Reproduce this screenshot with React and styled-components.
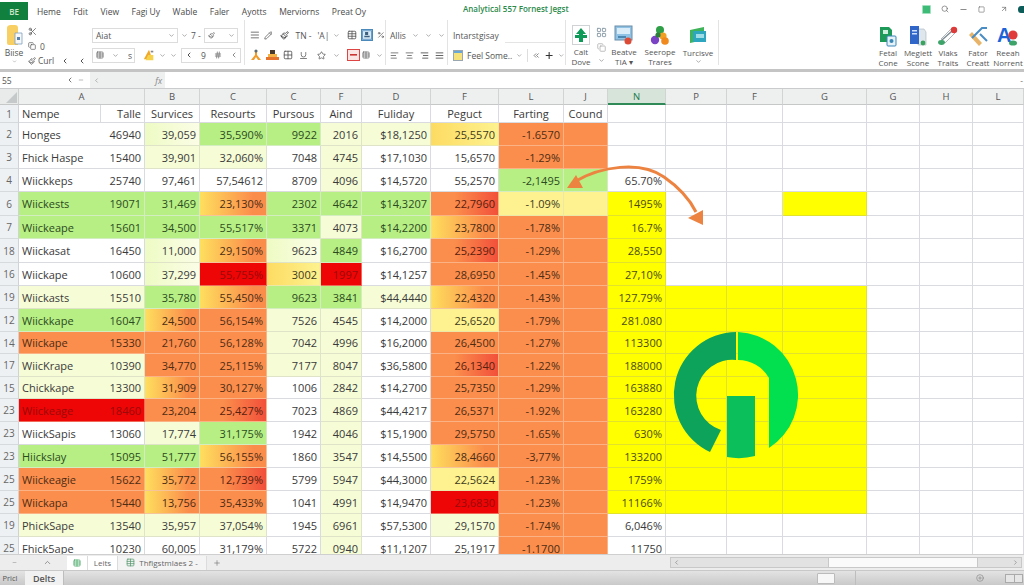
import React from 'react';
import styled, { createGlobalStyle } from 'styled-components';
import { ChevronDown, ChevronUp, Search, Minus, Plus, CirclePlus, Square, ArrowUpRight, AlignJustify, AlignLeft, AlignCenter, AlignRight, Star, ChevronLeft, ChevronRight, ChevronsLeft, Hash, Grid2x2, Copy, Percent, Pencil, Underline, Scissors, Paintbrush, Table, LayoutGrid } from 'lucide-react';

const GlobalStyle = createGlobalStyle`
  html, body {
    margin: 0;
    padding: 0;
    background: #fff;
    overflow: hidden;
  }
  * {
    box-sizing: border-box;
  }
`;

const TONES = {
  w: { bg: '#fff', line: '#d9dbe0', color: '#3a3a3a' },
  p: { bg: '#f6fcd6', line: '#dfe4c8', color: '#3a3a3a' },
  pf: { bg: 'linear-gradient(90deg, #eefbc4, #fbfde6)', line: '#dfe4c8', color: '#3a3a3a' },
  g: { bg: '#b7ef85', line: '#d3ecc0', color: '#2c4a20' },
  yl: { bg: '#fdf28f', line: '#ece8a8', color: '#3e3a1c' },
  yy: { bg: 'linear-gradient(90deg, #fddb62, #fdf28f)', line: '#ece8a8', color: '#3e3a1c' },
  yo: { bg: 'linear-gradient(90deg, #fedf5e, #fb8d4b 80%)', line: '#f5c49a', color: '#4a2c14' },
  o: { bg: '#fb8e4c', line: '#fbb285', color: '#4e2c14' },
  or: { bg: 'linear-gradient(90deg, #fb8e4c 35%, #f2503a)', line: '#fbb285', color: '#57200f' },
  r: { bg: '#ee0505', line: '#f06a5a', color: '#9a0a0a' },
  Y: { bg: '#ffff00', line: '#e2e22c', color: '#4b4b12' },
};

// talle and name share a tone, the rest are listed column by column
const ROWS = [
  { n: '2', h: 23, v: ['Honges', '46940', '39,059', '35,590%', '9922', '2016', '$18,1250', '25,5570', '-1.6570', '', ''], t: 'w pf g g p p yy o o w' },
  { n: '3', h: 23, v: ['Fhick Haspe', '15400', '39,901', '32,060%', '7048', '4745', '$17,1030', '15,6570', '-1.29%', '', ''], t: 'w p p w p w w o o w' },
  { n: '4', h: 23, v: ['Wiickkeps', '25740', '97,461', '57,54612', '8709', '4096', '$14,5720', '55,2570', '-2,1495', '', '65.70%'], t: 'w w w w p w w g g w' },
  { n: '6', h: 24, v: ['Wiickests', '19071', '31,469', '23,130%', '2302', '4642', '$14,3207', '22,7960', '-1.09%', '', '1495%'], t: 'g g yo g g g or yl yl Y', x: 'w w Y' },
  { n: '7', h: 23, v: ['Wiickeape', '15601', '34,500', '55,517%', '3371', '4073', '$14,2200', '23,7800', '-1.78%', '', '16.7%'], t: 'g g g g p g yo o o Y' },
  { n: '18', h: 24, v: ['Wiickasat', '16450', '11,000', '29,150%', '9623', '4849', '$16,2700', '25,2390', '-1.29%', '', '28,550'], t: 'w pf yo pf g w or o o Y' },
  { n: '16', h: 23, v: ['Wiickape', '10600', '37,299', '55,755%', '3002', '1997', '$14,1257', '28,6950', '-1.45%', '', '27,10%'], t: 'w pf r yy r w o o o Y' },
  { n: '19', h: 23, v: ['Wiickasts', '15510', '35,780', '55,450%', '9623', '3841', '$44,4440', '22,4320', '-1.43%', '', '127.79%'], t: 'p g yo g g p yo o o Y', x: 'Y Y Y' },
  { n: '12', h: 23, v: ['Wiickkape', '16047', '24,500', '56,154%', '7526', '4545', '$14,2000', '25,6520', '-1.79%', '', '281.080'], t: 'g yo o p p w yl o o Y', x: 'Y Y Y' },
  { n: '14', h: 22, v: ['Wiickape', '15330', '21,760', '56,128%', '7042', '4996', '$16,2000', '26,4500', '-1.27%', '', '113300'], t: 'o o o p p w o o o Y', x: 'Y Y Y' },
  { n: '17', h: 23, v: ['WiicKrape', '10390', '34,770', '25,115%', '7177', '8047', '$36,5800', '26,1340', '-1.22%', '', '188000'], t: 'p o o p p w or o o Y', x: 'Y Y Y' },
  { n: '15', h: 22, v: ['Chickkape', '13300', '31,909', '30,127%', '1006', '2842', '$14,2700', '25,7350', '-1.29%', '', '163880'], t: 'p yo o w p w o o o Y', x: 'Y Y Y' },
  { n: '23', h: 23, v: ['Wiickeage', '18460', '23,204', '25,427%', '7023', '4869', '$44,4217', '26,5371', '-1.92%', '', '163280'], t: 'r o or w p w o o o Y', x: 'Y Y Y' },
  { n: '23', h: 23, v: ['WiickSapis', '13060', '17,774', '31,175%', '1942', '4046', '$15,1900', '29,5750', '-1.65%', '', '630%'], t: 'w p g w p w o o o Y', x: 'Y Y Y' },
  { n: '23', h: 23, v: ['Hiickslay', '15095', '51,777', '56,155%', '1860', '3547', '$14,5500', '28,4660', '-3,77%', '', '133200'], t: 'g g yo w p w yo o o Y', x: 'Y Y Y' },
  { n: '25', h: 23, v: ['Wiickeagie', '15622', '35,772', '12,739%', '5799', '5947', '$44,3000', '22,5624', '-1.23%', '', '1759%'], t: 'o yo or w p w yl o o Y', x: 'Y Y Y' },
  { n: '25', h: 23, v: ['Wiickapa', '15440', '13,756', '35,433%', '1041', '4991', '$14,9470', '23,6830', '-1.23%', '', '11166%'], t: 'o yo o w p w r o o Y', x: 'Y Y Y' },
  { n: '19', h: 23, v: ['PhickSape', '13540', '35,957', '37,054%', '1945', '6961', '$57,5300', '29,1570', '-1.74%', '', '6,046%'], t: 'p p p w p w p o o w' },
  { n: '25', h: 23, v: ['Fhick5ape', '10230', '60,005', '31,179%', '5722', '0940', '$11,1207', '25,1917', '-1.1700', '', '11750'], t: 'w w w w p w w o o w' },
];

const COLUMNS = ['A', 'B', 'C', 'C', 'F', 'D', 'F', 'L', 'J', 'N', 'P', 'F', 'G', 'G', 'H', 'L'];
const HEADINGS = ['Nempe', 'Talle', 'Survices', 'Resourts', 'Pursous', 'Aind', 'Fuliday', 'Peguct', 'Farting', 'Cound', ''];
const GRID = '19px 82px 44px 55px 67px 54px 41px 69px 68px 65px 44px 58px 61px 56px 84px 53px 53px 51px';
const HEAD_GRID = '19px 126px 55px 67px 54px 41px 69px 68px 65px 44px 58px 61px 56px 84px 53px 53px 51px';

const Page = styled.div`
  position: relative;
  width: 1024px;
  height: 585px;
  display: flex;
  flex-direction: column;
  font-family: 'Open Sans', 'Liberation Sans', sans-serif;
  color: #444;
  overflow: hidden;
  background: #fff;
`;

const TitleBar = styled.div`
  height: 20px;
  flex: none;
  display: flex;
  align-items: flex-start;
  background: #fff;
`;

const FileTab = styled.div`
  width: 28px;
  height: 18px;
  margin-top: 2px;
  background: #11803f;
  color: #cfe9c8;
  font-size: 8px;
  font-weight: 600;
  display: flex;
  align-items: center;
  justify-content: center;
`;

const Menu = styled.nav`
  display: flex;
  gap: 12.5px;
  margin-left: 9px;
  padding-top: 5px;
  font-size: 8.5px;
  line-height: 14px;
  color: #4a4a4a;
  white-space: nowrap;
`;

const DocTitle = styled.div`
  position: absolute;
  left: 463px;
  top: 2px;
  font-size: 8px;
  line-height: 13px;
  font-weight: 600;
  color: #2a8a4a;
  white-space: nowrap;
`;

const WindowButtons = styled.div`
  margin-left: auto;
  display: flex;
  align-items: center;
  gap: 10px;
  height: 18px;
  color: #666;
`;

const SaveBadge = styled.span`
  width: 9px;
  height: 9px;
  background: #3fbb78;
  border: 1.5px solid #9fe0bd;
  border-radius: 1px;
`;

const TealDot = styled.span`
  width: 6px;
  height: 7px;
  background: #0c5c5a;
  border-radius: 50% 0 0 50%;
`;

const Ribbon = styled.div`
  height: 52px;
  flex: none;
  display: flex;
  background: #fff;
  font-size: 8.5px;
  color: #555;
  border-bottom: 3px solid #c4c4c4;
`;

const Group = styled.div`
  width: ${p => p.$w}px;
  flex: none;
  display: flex;
  flex-direction: ${p => (p.$row ? 'row' : 'column')};
  gap: ${p => (p.$row ? 0 : 4)}px;
  padding: ${p => p.$pad || '7px 0 0 3px'};
  border-right: ${p => (p.$line ? '1px solid #e3e3e3' : 'none')};
  margin-bottom: 4px;
`;

const ToolRow = styled.div`
  display: flex;
  align-items: center;
  gap: ${p => p.$gap || 4}px;
  height: 16px;
  white-space: nowrap;
`;

const Nudge = styled.span`
  display: inline-flex;
  align-items: center;
  margin-left: ${p => p.$l}px;
`;

const Rule = styled.span`
  flex: 1;
  height: 1px;
  margin: 14px 0 0 2px;
  background: #e4e4e4;
`;

const Divider = styled.span`
  width: 1px;
  height: 13px;
  background: #dedede;
`;

const PasteCol = styled.div`
  width: 24px;
  display: flex;
  flex-direction: column;
  align-items: center;
  gap: 2px;
  line-height: 9px;
`;

const SmallCol = styled.div`
  flex: 1;
  display: flex;
  flex-direction: column;
  justify-content: space-between;
  padding-left: 2px;
  margin-bottom: -3px;
`;

const Field = styled.div`
  width: ${p => p.$w}px;
  height: ${p => p.$h || 15}px;
  display: flex;
  align-items: center;
  justify-content: space-between;
  padding: 0 2px 0 3px;
  border: 1px solid #dcdcdc;
  background: #fff;
`;

const Chip = styled.span`
  width: 12px;
  height: 12px;
  display: inline-flex;
  align-items: center;
  justify-content: center;
  flex: none;
  background: ${p => p.$bg || 'transparent'};
  border: ${p => (p.$edge ? `1px solid ${p.$edge}` : 'none')};
  color: ${p => p.$color || '#555'};
`;

const Swatch = styled.span`
  width: 10px;
  height: 11px;
  flex: none;
  background: linear-gradient(#6aa6d6 25%, #f5e27a 25%);
  border: 1px solid #9aa7b0;
`;

const BigTool = styled.div`
  width: ${p => p.$w || 30}px;
  flex: none;
  display: flex;
  flex-direction: column;
  align-items: center;
  text-align: center;
  line-height: 9.5px;
  font-size: 8px;
  white-space: nowrap;
`;

const BigIcon = styled.div`
  height: 23px;
  margin-bottom: 1px;
  display: flex;
  align-items: center;
  justify-content: center;
`;

const PlusBox = styled.div`
  width: 18px;
  height: 20px;
  margin-bottom: 2px;
  display: flex;
  align-items: center;
  justify-content: center;
  border: 1px solid #cfd3d6;
  color: #0e9a58;
`;

const StackedIcons = styled.div`
  display: flex;
  flex-direction: column;
  align-items: center;
  gap: 5px;
  padding-top: 3px;
`;

const RightTools = styled.div`
  margin-left: auto;
  display: flex;
  padding-top: 4px;
  margin-right: 1px;
`;

const FormulaBar = styled.div`
  height: 17px;
  flex: none;
  display: flex;
  align-items: center;
  background: #fff;
  border-bottom: 1px solid #c9cbcc;
  font-size: 8.5px;
  color: #555;
`;

const NameBox = styled.div`
  width: 66px;
  padding-left: 2px;
`;

const FormulaControls = styled.div`
  width: 24px;
  display: flex;
  align-items: center;
  gap: 4px;
  color: #777;
`;

const FormulaGrey = styled.div`
  width: 75px;
  height: 100%;
  display: flex;
  align-items: center;
  justify-content: space-between;
  padding: 0 3px;
  background: #eeefef;
  color: #888;
  font-style: italic;
`;

const FormulaInput = styled.div`
  flex: 1;
  text-align: right;
  padding-right: 1px;
  color: #777;
`;

const Sheet = styled.div`
  height: 465px;
  flex: none;
  overflow: hidden;
  background: #fff;
  font-size: 11px;
`;

const ColumnHead = styled.div`
  display: grid;
  grid-template-columns: ${HEAD_GRID};
  height: 16px;
`;

const Corner = styled.div`
  background: #e9ebeb;
  border-right: 1px solid #cfd1d1;
  border-bottom: 1px solid #c6c8c8;
  position: relative;
  overflow: hidden;
  &::after {
    content: '';
    position: absolute;
    right: 1px;
    bottom: 1px;
    border-style: solid;
    border-width: 0 0 11px 11px;
    border-color: transparent transparent #c6c9c9 transparent;
  }
`;

const ColLabel = styled.div`
  display: flex;
  align-items: center;
  justify-content: center;
  font-size: 9.5px;
  color: ${p => (p.$active ? '#1d7a45' : '#555')};
  background: ${p => (p.$active ? '#d7e4da' : '#eef0f0')};
  border-right: 1px solid #d2d4d4;
  border-bottom: ${p => (p.$active ? '2px solid #2f8a58' : '1px solid #c6c8c8')};
`;

const Row = styled.div`
  display: grid;
  grid-template-columns: ${GRID};
  height: ${p => p.$h}px;
`;

const RowLabel = styled.div`
  display: flex;
  align-items: center;
  justify-content: center;
  font-size: 10px;
  color: #666;
  background: #eef1f3;
  border-right: 1px solid #cfd2d6;
  border-bottom: 1px solid #d7dadd;
`;

const Cell = styled.div`
  display: flex;
  align-items: center;
  justify-content: ${p => (p.$left ? 'flex-start' : p.$center ? 'center' : 'flex-end')};
  padding: ${p => (p.$left ? '0 0 0 3px' : p.$center ? '0' : '0 3px 0 0')};
  background: ${p => TONES[p.$tone].bg};
  color: ${p => TONES[p.$tone].color};
  border-right: ${p => (p.$open ? 'none' : `1px solid ${TONES[p.$tone].line}`)};
  border-bottom: 1px solid ${p => TONES[p.$tone].line};
  white-space: nowrap;
  overflow: hidden;
`;

const TabBar = styled.div`
  height: 17px;
  flex: none;
  display: flex;
  align-items: center;
  background: #ededed;
  border-top: 1px solid #cfcfcf;
  border-bottom: 1px solid #c8c8c8;
  font-size: 8px;
  color: #666;
`;

const TabControl = styled.span`
  width: ${p => p.$w}px;
  display: flex;
  align-items: center;
  justify-content: center;
  color: #777;
`;

const SheetTab = styled.div`
  height: 14px;
  width: ${p => p.$w}px;
  display: flex;
  align-items: center;
  justify-content: center;
  gap: 4px;
  background: ${p => (p.$on ? '#fff' : '#f4f4f4')};
  border-right: 1px solid #dcdcdc;
  white-space: nowrap;
`;

const Scroller = styled.div`
  position: relative;
  margin-left: auto;
  margin-right: 2px;
  width: 352px;
  height: 11px;
  background: #e2e2e2;
  border: 1px solid #c8c8c8;
  display: flex;
  align-items: center;
  justify-content: space-between;
  padding: 0 2px;
  color: #777;
`;

const Thumb = styled.div`
  position: absolute;
  left: 157px;
  top: 0;
  width: 150px;
  height: 9px;
  background: #fafafa;
  border-left: 1px solid #c8c8c8;
  border-right: 1px solid #c8c8c8;
`;

const StatusBar = styled.div`
  flex: 1;
  display: flex;
  align-items: stretch;
  background: linear-gradient(#e3e3e3, #c9c9c9);
  font-size: 8px;
  color: #555;
`;

const StatusTab = styled.div`
  width: ${p => p.$w}px;
  display: flex;
  align-items: center;
  justify-content: center;
  font-size: ${p => (p.$on ? 9 : 7.5)}px;
  font-weight: ${p => (p.$on ? 600 : 400)};
  background: ${p => (p.$on ? '#f1f1f1' : 'transparent')};
  border-right: ${p => (p.$on ? '1px solid #bdbdbd' : 'none')};
  margin-right: ${p => (p.$on ? 0 : 5)}px;
`;

const ZoomArea = styled.div`
  margin-left: auto;
  display: flex;
  align-items: center;
  height: 100%;
  color: #888;
`;

const ZoomBox = styled.span`
  width: 18px;
  height: 11px;
  background: #f7f7f7;
  border: 1px solid #bbb;
  border-radius: 1px;
  margin-right: 20px;
`;

const ZoomTrack = styled.span`
  width: 121px;
  height: 100%;
  border-left: 1px solid #bdbdbd;
`;

const ZoomPlus = styled.span`
  width: 18px;
  height: 9px;
  margin: 0 1px 0 21px;
  border: 1px solid #aaa;
  background: linear-gradient(90deg, #e6e6e6 48%, #aaa 48%, #aaa 54%, #e6e6e6 54%);
`;

const Overlay = styled.svg`
  position: absolute;
  left: 0;
  top: 0;
  width: 1024px;
  height: 585px;
  pointer-events: none;
`;

const PasteIcon = () => (
  <svg width="17" height="22" viewBox="0 0 17 22">
    <path d="M1 4 Q1 1 5 1 H9 Q12 1 12 4 V21 H3 Q1 21 1 19 Z" fill="#f7cf63" />
    <path d="M9 9 H16 V20 H9 Z" fill="#f6f8fa" stroke="#7fa0c0" strokeWidth="0.8" />
    <path d="M11 13 H14 V16 H11 Z" fill="#5b84ad" />
  </svg>
);

const FillIcon = () => (
  <svg width="14" height="14" viewBox="0 0 14 14">
    <path d="M1 12 L7 1 L11 12 Z" fill="#f0a82a" />
    <path d="M6 7 H12 V13 H3 Z" fill="#f6d24a" />
    <path d="M9 2 H12 V4 H9 Z" fill="#888" />
  </svg>
);

const BlueDoc = () => (
  <svg width="13" height="12" viewBox="0 0 13 12">
    <rect x="0.5" y="0.5" width="12" height="11" fill="#d8e8f5" stroke="#4c89bb" />
    <path d="M4 2 H8 V6 H4 Z M3 7 H10 V9 H3 Z" fill="#3b5f7d" />
  </svg>
);

const OrangeMan = () => (
  <svg width="12" height="12" viewBox="0 0 12 12">
    <path d="M5 1 V6 L1 11 H4 L6 8 L8 11 H11 L7 6 V1 Z" fill="#ef9c2d" />
    <circle cx="6" cy="2" r="1.6" fill="#5d6b75" />
  </svg>
);

const OrangeStack = () => (
  <svg width="13" height="12" viewBox="0 0 13 12">
    <rect x="4" y="1" width="5" height="4" fill="#4a3a2a" />
    <rect x="2" y="5" width="9" height="3" fill="#f3b246" />
    <rect x="0" y="8" width="13" height="3" fill="#e5722d" />
  </svg>
);

const RedBox = () => (
  <svg width="13" height="12" viewBox="0 0 13 12">
    <rect x="0.5" y="0.5" width="12" height="11" fill="#fbe4e4" stroke="#d44" />
    <rect x="3" y="5" width="7" height="1.6" fill="#c33" />
  </svg>
);

const CellIcon = () => (
  <svg width="12" height="14" viewBox="0 0 12 14">
    <path d="M6 0 L11 6 H8 V14 H4 V6 H1 Z M0 7 H12 V10 H0 Z" fill="#0e9a58" />
  </svg>
);

const ScreenIcon = () => (
  <svg width="20" height="22" viewBox="0 0 20 22">
    <rect x="1" y="2" width="17" height="14" fill="#8fc2e4" stroke="#6a8ea8" />
    <rect x="3" y="4" width="13" height="6" fill="#d9ecf7" />
    <rect x="4" y="12" width="8" height="2" fill="#4a86b0" />
    <circle cx="14" cy="17" r="3.5" fill="#dd4a35" />
  </svg>
);

const BlobsIcon = () => (
  <svg width="20" height="22" viewBox="0 0 20 22">
    <circle cx="10" cy="6" r="4" fill="#2e9e47" />
    <circle cx="13" cy="12" r="3.6" fill="#f2a024" />
    <circle cx="5" cy="16" r="4.2" fill="#7a42c4" />
    <circle cx="15" cy="17" r="3.8" fill="#f08a1e" />
    <circle cx="8" cy="11" r="2.6" fill="#2d7d3c" />
  </svg>
);

const FolderCards = () => (
  <svg width="18" height="20" viewBox="0 0 18 20">
    <path d="M1 4 L15 1 V14 L1 17 Z" fill="#3eb358" />
    <rect x="4" y="5" width="13" height="11" fill="#2ea6c0" />
    <rect x="7" y="8" width="8" height="4" fill="#9edce6" />
  </svg>
);

const GreenDocs = () => (
  <svg width="20" height="22" viewBox="0 0 20 22">
    <path d="M2 2 H11 L14 5 V17 H2 Z" fill="#1e9a58" />
    <rect x="5" y="5" width="5" height="4" fill="#cdeedd" />
    <rect x="9" y="11" width="9" height="10" rx="1" fill="#e6f1f8" stroke="#3a87b8" />
    <circle cx="13.5" cy="16" r="2" fill="#3a87b8" />
  </svg>
);

const BlueDocs = () => (
  <svg width="20" height="22" viewBox="0 0 20 22">
    <path d="M10 4 H16 L18 7 V20 H10 Z" fill="#dfe6ec" stroke="#a9b4bd" strokeWidth="0.6" />
    <path d="M2 1 H11 V19 H2 Z" fill="#2f66c8" />
    <rect x="4" y="5" width="5" height="1.5" fill="#cfe0fb" />
    <rect x="4" y="8" width="5" height="1.5" fill="#cfe0fb" />
    <circle cx="15" cy="18" r="2.4" fill="#3aa35e" />
  </svg>
);

const PinIcon = () => (
  <svg width="22" height="22" viewBox="0 0 22 22">
    <path d="M15 6 L5 15" stroke="#7c8a92" strokeWidth="1.4" fill="none" />
    <path d="M14 4 L18 8 L8 18 L4 14 Z" fill="none" stroke="#9aa5ab" strokeWidth="0.8" />
    <circle cx="17" cy="5" r="3.2" fill="#dd3a3a" />
    <ellipse cx="4.5" cy="17.5" rx="3.4" ry="2.4" fill="#3da368" />
  </svg>
);

const RulerIcon = () => (
  <svg width="22" height="22" viewBox="0 0 22 22">
    <path d="M2 10 L12 21 L15 18 L5 7 Z" fill="#e8b46a" />
    <path d="M5 13 L15 3 H20 M13 9 L20 16" stroke="#4a8dc4" strokeWidth="2" fill="none" />
  </svg>
);

const LetterIcon = () => (
  <svg width="22" height="22" viewBox="0 0 22 22">
    <text x="0" y="17" fontSize="20" fontWeight="700" fontFamily="Liberation Sans, sans-serif" fill="#1d63d8">A</text>
    <circle cx="16" cy="10" r="4.6" fill="#e03a3a" />
    <ellipse cx="16" cy="18" rx="4" ry="2.6" fill="#3da368" />
  </svg>
);

const Chevron = ({ s = 7 }) => <ChevronDown size={s} strokeWidth={2} color="#777" />;

const TopBar = () => (
  <TitleBar>
    <FileTab>BE</FileTab>
    <Menu>
      {['Heme', 'Fdit', 'View', 'Fagi Uy', 'Wable', 'Faler', 'Ayotts', 'Merviorns', 'Preat Oy'].map((m, i) => (
        <span key={i}>{m}</span>
      ))}
    </Menu>
    <DocTitle>Analytical 557 Fornest Jegst</DocTitle>
    <WindowButtons>
      <SaveBadge />
      <Search size={8} />
      <Minus size={9} />
      <Square size={7} />
      <Nudge $l={5}><ArrowUpRight size={8} /></Nudge>
      <TealDot />
    </WindowButtons>
  </TitleBar>
);

const RibbonBar = () => (
  <Ribbon>
    <Group $w={90} $row $pad="4px 0 0 2px">
      <PasteCol>
        <PasteIcon />
        <span>Biise</span>
        <Chevron s={5} />
      </PasteCol>
      <SmallCol>
        <ToolRow><Scissors size={9} /></ToolRow>
        <ToolRow><Copy size={8} /><span>0</span></ToolRow>
        <ToolRow $gap={2}>
          <Paintbrush size={8} />
          <span>Curl</span>
          <Nudge $l={5}><ChevronLeft size={8} strokeWidth={3} /></Nudge>
          <Nudge $l={7}><ChevronLeft size={8} strokeWidth={3} /></Nudge>
        </ToolRow>
      </SmallCol>
    </Group>
    <Group $w={155} $pad="7px 0 0 2px" $line>
      <ToolRow $gap={3}>
        <Field $w={86}><span>Aiat</span><Chevron /></Field>
        <Chevron />
        <span>7 -</span>
        <Field $w={34}><Paintbrush size={7} /><Chevron /></Field>
      </ToolRow>
      <ToolRow $gap={4}>
        <Field $w={43}><Table size={8} /><Chevron /><span>s</span></Field>
        <Nudge $l={4}><Chip><FillIcon /></Chip></Nudge>
        <Chevron />
        <Chevron />
        <Field $w={60}>
          <ChevronLeft size={8} strokeWidth={3} />
          <span>9</span>
          <Hash size={8} />
          <ChevronLeft size={8} />
        </Field>
      </ToolRow>
    </Group>
    <Group $w={141} $pad="7px 0 0 5px" $line>
      <ToolRow $gap={4}>
        <AlignJustify size={10} />
        <Pencil size={9} />
        <Nudge $l={4}><Paintbrush size={9} color="#333" /></Nudge>
        <Nudge $l={2}><span>TN -</span></Nudge>
        <Nudge $l={2}><span>'A|</span></Nudge>
        <Chevron />
        <Nudge $l={3}><Table size={10} /></Nudge>
        <Chip $bg="#d7e6f4" $edge="#4c89bb"><BlueDoc /></Chip>
        <Percent size={8} />
      </ToolRow>
      <ToolRow $gap={4}>
        <OrangeMan />
        <OrangeStack />
        <Grid2x2 size={10} />
        <Nudge $l={2}><Underline size={9} /></Nudge>
        <Nudge $l={5}><Star size={9} /></Nudge>
        <Nudge $l={3}><Chevron /></Nudge>
        <Nudge $l={3}><RedBox /></Nudge>
        <Nudge $l={-2}><Table size={8} /></Nudge>
        <Nudge $l={2}><Chevron /></Nudge>
      </ToolRow>
    </Group>
    <Group $w={62} $pad="7px 0 0 4px" $line>
      <ToolRow $gap={6}>
        <span>Allis</span>
        <Chevron />
        <Chevron />
        <Chevron />
      </ToolRow>
      <ToolRow $gap={6}>
        <AlignLeft size={9} />
        <AlignCenter size={9} />
        <AlignRight size={9} color="#333" />
        <AlignJustify size={9} color="#333" />
      </ToolRow>
    </Group>
    <Group $w={118} $pad="7px 0 0 5px" $line>
      <ToolRow>
        <span>Intarstgisay</span>
        <Rule />
      </ToolRow>
      <ToolRow $gap={4}>
        <Swatch />
        <span>Feel Some..</span>
        <Chevron />
        <Divider />
        <ChevronsLeft size={9} />
        <Plus size={11} strokeWidth={2.5} color="#333" />
        <Chevron />
      </ToolRow>
    </Group>
    <Group $w={28} $pad="5px 0 0 5px">
      <BigTool $w={20}>
        <PlusBox><CellIcon /></PlusBox>
        <span>Calt</span>
        <span>Dove</span>
      </BigTool>
    </Group>
    <Group $w={125} $row $pad="4px 0 0 0" $line>
      <BigTool $w={15}>
        <StackedIcons>
          <LayoutGrid size={11} color="#8a9aa6" />
          <Copy size={9} color="#aaa" />
          <Chevron />
        </StackedIcons>
      </BigTool>
      <BigTool $w={30}>
        <BigIcon><ScreenIcon /></BigIcon>
        <span>Beatve</span>
        <span>TIA ▾</span>
      </BigTool>
      <BigTool $w={42}>
        <BigIcon><BlobsIcon /></BigIcon>
        <span>Seerope</span>
        <span>Trares</span>
      </BigTool>
      <BigTool $w={34}>
        <BigIcon><FolderCards /></BigIcon>
        <span>Turcisve</span>
        <Chevron />
      </BigTool>
    </Group>
    <RightTools>
      {[
        [<GreenDocs />, 'Fetal', 'Cone'],
        [<BlueDocs />, 'Megiett', 'Scone'],
        [<PinIcon />, 'Vlaks', 'Traits'],
        [<RulerIcon />, 'Fator', 'Creatt'],
        [<LetterIcon />, 'Reeah', 'Norrent'],
      ].map(([icon, a, b]) => (
        <BigTool key={a} $w={30}>
          <BigIcon>{icon}</BigIcon>
          <span>{a}</span>
          <span>{b}</span>
        </BigTool>
      ))}
    </RightTools>
  </Ribbon>
);

const Formula = () => (
  <FormulaBar>
    <NameBox>55</NameBox>
    <FormulaControls>
      <ChevronLeft size={8} strokeWidth={3} />
      <Minus size={6} />
    </FormulaControls>
    <FormulaGrey>
      <ChevronLeft size={7} />
      <span>fx</span>
    </FormulaGrey>
    <FormulaInput>-</FormulaInput>
  </FormulaBar>
);

const Grid = () => (
  <Sheet>
    <ColumnHead>
      <Corner />
      {COLUMNS.map((c, i) => (
        <ColLabel key={i} $active={i === 9}>{c}</ColLabel>
      ))}
    </ColumnHead>
    <Row $h={18}>
      <RowLabel>1</RowLabel>
      {HEADINGS.map((h, i) => (
        <Cell key={i} $tone="w" $left={i === 0} $center={i > 1}>{h}</Cell>
      ))}
      {[0, 1, 2, 3, 4, 5].map(i => <Cell key={i} $tone="w" />)}
    </Row>
    {ROWS.map((row, r) => {
      const tones = row.t.split(' ');
      const extra = (row.x || 'w w w').split(' ');
      // the A column is two grid tracks, with the same tone on both
      const cellTones = [tones[0], ...tones];
      return (
        <Row key={r} $h={row.h}>
          <RowLabel>{row.n}</RowLabel>
          {row.v.map((val, i) => (
            <Cell key={i} $tone={cellTones[i]} $left={i === 0} $open={i === 0}>{val}</Cell>
          ))}
          {extra.map((t, i) => <Cell key={i} $tone={t} />)}
          {[0, 1, 2].map(i => <Cell key={i} $tone="w" />)}
        </Row>
      );
    })}
  </Sheet>
);

const Tabs = () => (
  <>
    <TabBar>
      <TabControl $w={28}><Minus size={5} /></TabControl>
      <TabControl $w={39}><ChevronUp size={9} /></TabControl>
      <SheetTab $w={21} $on><Table size={8} color="#2a9a50" /></SheetTab>
      <SheetTab $w={30} $on>Leits</SheetTab>
      <SheetTab $w={89}><Table size={9} color="#5a9a70" />Thfigstmlaes 2 -</SheetTab>
      <TabControl $w={20}><Plus size={8} /></TabControl>
      <Scroller>
        <ChevronLeft size={7} />
        <Thumb />
        <ChevronRight size={7} />
      </Scroller>
    </TabBar>
    <StatusBar>
      <StatusTab $w={20}>Pricl</StatusTab>
      <StatusTab $w={39} $on>Delts</StatusTab>
      <ZoomArea>
        <ZoomBox />
        <ZoomTrack />
        <CirclePlus size={8} />
        <ZoomPlus />
      </ZoomArea>
    </StatusBar>
  </>
);

const App = () => (
  <Page>
    <GlobalStyle />
    <TopBar />
    <RibbonBar />
    <Formula />
    <Grid />
    <Tabs />
    <Overlay viewBox="0 0 1024 585">
      <path d="M576 181 C600 167 640 160 664 177 C680 188 690 200 696 212" fill="none" stroke="#ed8341" strokeWidth="3" />
      <polygon points="567,188 583,188 576,175" fill="#ed8341" />
      <polygon points="688,218 703,210 703,225" fill="#ed8341" />
      <path d="M736 332 A63 63 0 0 0 710 452 L721 430 A36 36 0 0 1 736 360 Z" fill="#0ea35b" />
      <path d="M738 332 A63 63 0 0 1 769 448 L769 378 A36 36 0 0 0 738 360 Z" fill="#03e04f" />
      <path d="M727 396 H755 V456 A63 63 0 0 1 727 457 Z" fill="#0bbf5b" />
    </Overlay>
  </Page>
);

export default App;
